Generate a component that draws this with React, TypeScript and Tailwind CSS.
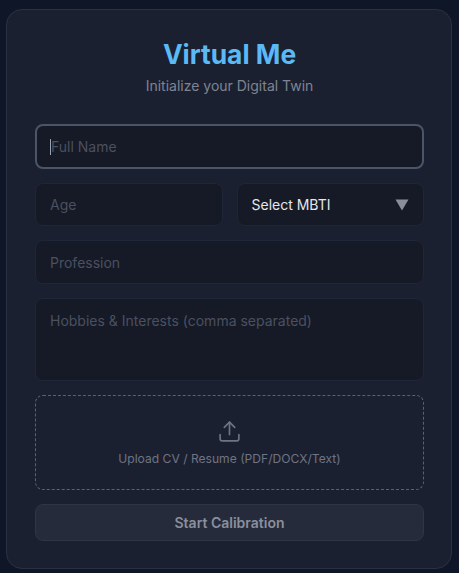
import { Upload } from "lucide-react";

const fieldClass =
  "w-full rounded-lg border border-[#1f2637] bg-[#161a26] px-[14px] text-[14px] text-[#e5e7eb] outline-none placeholder:text-[#4b5060]";

export default function App() {
  return (
    <div className="h-[573px] w-[459px] overflow-hidden bg-[#0f1627] pb-[4px] pl-[6px] pr-[7px] pt-[9px] font-['Inter',sans-serif]">
      <div className="flex h-full flex-col rounded-[16px] border border-[#2a3142] bg-[#1a2030] pl-[28px] pr-[27px] pt-[28px]">
        <h1 className="text-center text-[26.4px] font-bold leading-[32px] text-[#5bb9f6]">Virtual Me</h1>
        <p className="mt-[6px] text-center text-[14px] leading-[20px] text-[#7f8492]">Initialize your Digital Twin</p>

        <form className="mt-[28px] flex flex-col gap-[14px]">
          <div className="flex h-[45px] items-center rounded-lg border-2 border-[#4c5468] bg-[#161a26] pl-[13px] pr-[13px]">
            <span className="h-[16px] w-px bg-[#9ca3af]" />
            <input placeholder="Full Name" className="w-full bg-transparent text-[14px] text-[#e5e7eb] outline-none placeholder:text-[#4b5060]" />
          </div>

          <div className="grid grid-cols-2 gap-[14px]">
            <input placeholder="Age" className={`${fieldClass} h-[43px]`} />
            <div className="flex h-[43px] items-center justify-between rounded-lg border border-[#1f2637] bg-[#161a26] pl-[14px] pr-[14px] text-[14px] text-[#e5e7eb]">
              <span>Select MBTI</span>
              <svg width="14" height="12" viewBox="0 0 14 12" aria-hidden>
                <path d="M0.5 0.5h13L7 11.5z" fill="#8b8e98" />
              </svg>
            </div>
          </div>

          <input placeholder="Profession" className={`${fieldClass} h-[44px]`} />

          <textarea
            placeholder="Hobbies & Interests (comma separated)"
            className={`${fieldClass} h-[83px] resize-none py-[12px] leading-[20px]`}
          />

          <div className="flex h-[95px] flex-col items-center justify-center gap-[7px] rounded-lg border border-dashed border-[#5a6173]">
            <Upload size={25} strokeWidth={1.6} className="text-[#6e7484]" />
            <span className="text-[12.1px] leading-[16px] text-[#6e7484]">Upload CV / Resume (PDF/DOCX/Text)</span>
          </div>

          <button type="button" className="h-[37px] rounded-lg border border-[#2f3545] bg-[#252b3a] text-[14px] font-semibold text-[#8a8f9c]">
            Start Calibration
          </button>
        </form>
      </div>
    </div>
  );
}
